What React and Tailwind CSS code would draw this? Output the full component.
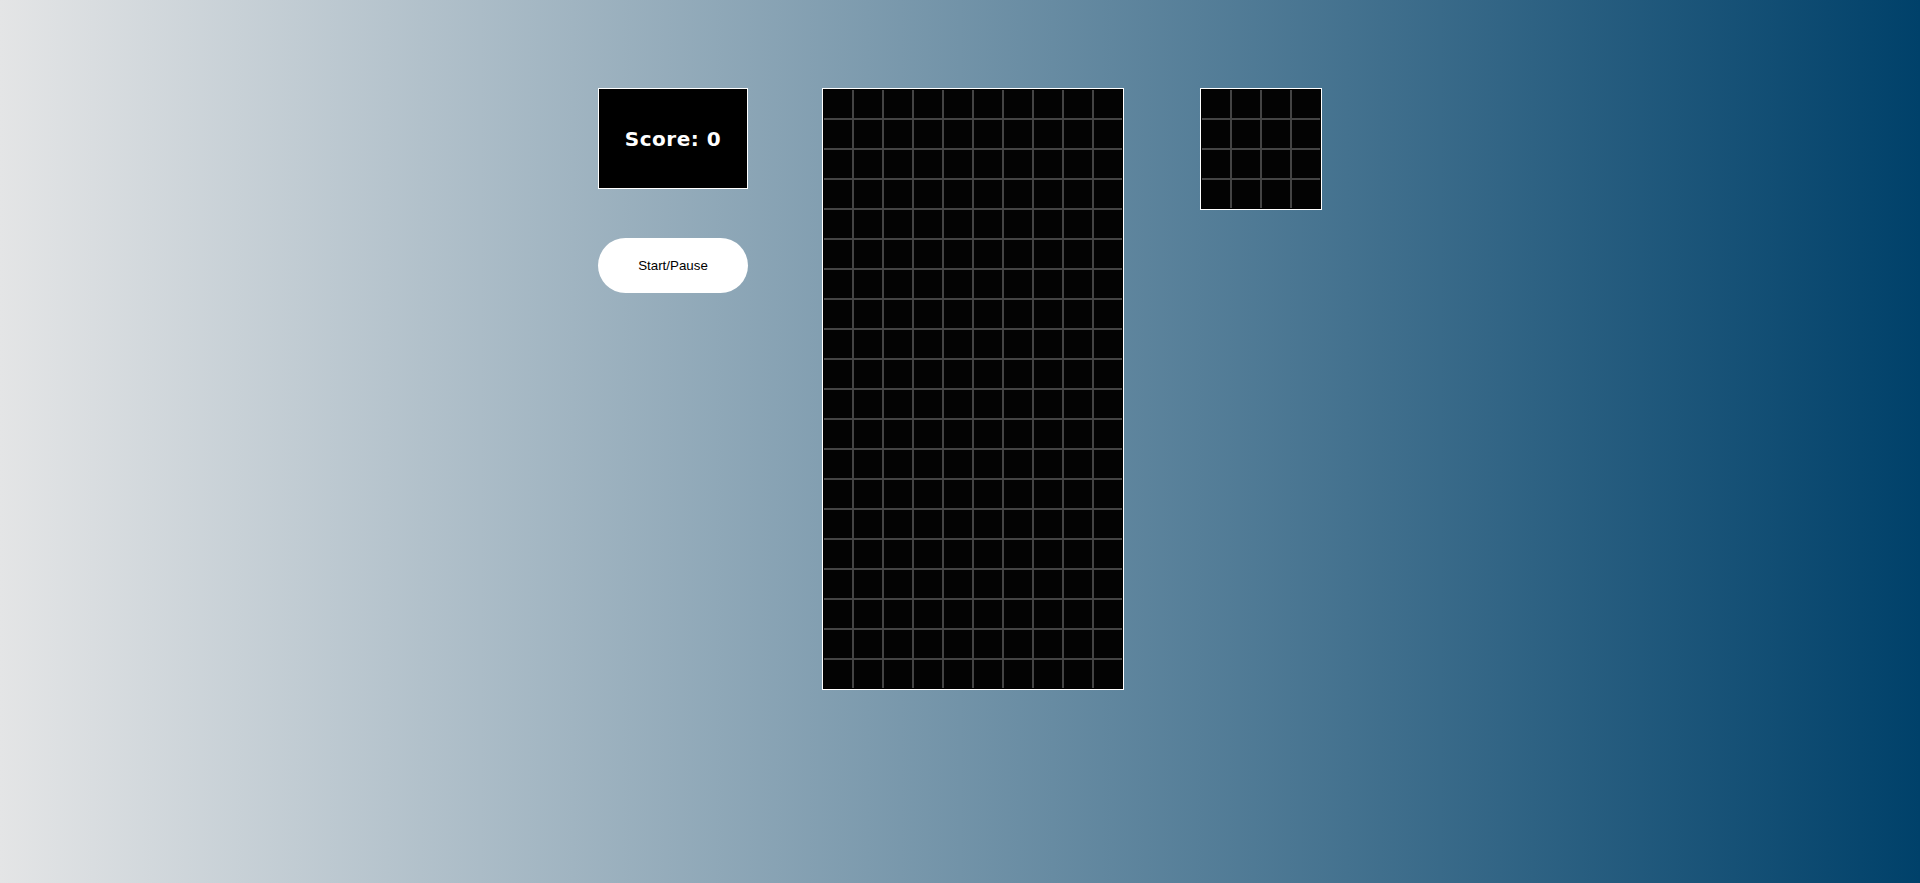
import React from "react";

function Grid({ cols, rows }) {
  const cells = Array.from({ length: cols * rows });
  return (
    <div className="border border-white bg-black p-[1px]">
      <div
        className={
          cols === 10
            ? "grid grid-cols-[repeat(10,28px)] auto-rows-[28px] gap-[2px] bg-[#444444]"
            : "grid grid-cols-[repeat(4,28px)] auto-rows-[28px] gap-[2px] bg-[#444444]"
        }
      >
        {cells.map((_, i) => (
          <div key={i} className="bg-[#030303]" />
        ))}
      </div>
    </div>
  );
}

export default function App() {
  return (
    <div className="min-h-[883px] w-full bg-[linear-gradient(to_right,#e4e5e6,#00416a)]">
      <div className="flex justify-center items-start pt-[88px]">
        <div className="flex flex-col w-[150px]">
          <div className="h-[101px] w-[150px] border border-white bg-black flex items-center justify-center">
            <span className="text-white text-[20px] font-bold font-['DejaVu_Sans',sans-serif] tracking-[0.5px]">
              Score: 0
            </span>
          </div>
          <button className="mt-[49px] h-[55px] w-[150px] rounded-full bg-white text-black text-[13.333px] font-['Liberation_Sans',Arial,sans-serif]">
            Start/Pause
          </button>
        </div>
        <div className="ml-[74px]">
          <Grid cols={10} rows={20} />
        </div>
        <div className="ml-[76px]">
          <Grid cols={4} rows={4} />
        </div>
      </div>
    </div>
  );
}
